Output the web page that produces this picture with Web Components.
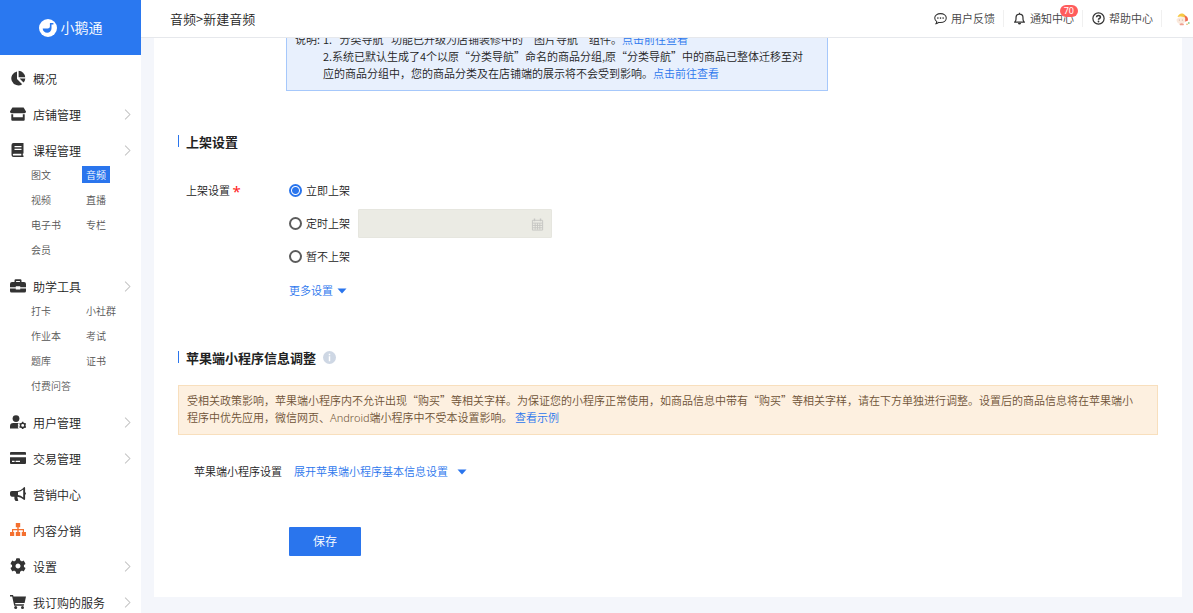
<!DOCTYPE html>
<html lang="zh-CN">
<head>
<meta charset="utf-8">
<title>新建音频</title>
<style>
    html, body {
        margin: 0;
        height: 100%;
        overflow: hidden;
    }
    body {
        font-family: "Noto Sans CJK SC", "Noto Sans", sans-serif;
        font-weight: 350;
        font-size: 11px;
        line-height: 17px;
        color: #222;
        background: #f4f6fb;
        --primary: #2a75ed;
    }
</style>
</head>
<body>
<admin-layout>
    <side-nav slot="side">
        <nav-item icon="pie" label="概况"></nav-item>
        <nav-item icon="store" label="店铺管理" arrow></nav-item>
        <nav-item icon="book" label="课程管理" arrow>
            <nav-link>图文</nav-link>
            <nav-link active>音频</nav-link>
            <nav-link>视频</nav-link>
            <nav-link>直播</nav-link>
            <nav-link>电子书</nav-link>
            <nav-link>专栏</nav-link>
            <nav-link>会员</nav-link>
        </nav-item>
        <nav-item icon="toolbox" label="助学工具" arrow>
            <nav-link>打卡</nav-link>
            <nav-link>小社群</nav-link>
            <nav-link>作业本</nav-link>
            <nav-link>考试</nav-link>
            <nav-link>题库</nav-link>
            <nav-link>证书</nav-link>
            <nav-link>付费问答</nav-link>
        </nav-item>
        <nav-item icon="user" label="用户管理" arrow></nav-item>
        <nav-item icon="card" label="交易管理" arrow></nav-item>
        <nav-item icon="horn" label="营销中心"></nav-item>
        <nav-item icon="sitemap" label="内容分销"></nav-item>
        <nav-item icon="cog" label="设置" arrow></nav-item>
        <nav-item icon="cart" label="我订购的服务" arrow></nav-item>
    </side-nav>
    <top-bar slot="top">
        <span slot="crumb">音频&gt;新建音频</span>
        <top-action icon="chat">用户反馈</top-action>
        <top-action icon="bell" badge="70">通知中心</top-action>
        <top-action icon="help">帮助中心</top-action>
    </top-bar>
    <audio-form></audio-form>
</admin-layout>

<script>
const ICONS = {
    pie: ['0 0 16 16', '<path d="M7 1.5V9l5.2 5.2A7 7 0 1 1 7 1.5z"/><path d="M8.6.8a7 7 0 0 1 6.6 6.4H8.6z"/><path d="M9.6 8.6h5.7a6.6 6.6 0 0 1-1.8 4z"/>'],
    store: ['0 0 16 16', '<path d="M2.4 1.5h11.2L16 5.6c0 1-.7 1.7-1.7 1.7H1.7C.7 7.300 0 6.600 0 5.600z"/><path d="M1.300 8.200h1.900v3h9.600v-3h1.900v5.500q0 1-1 1H2.300q-1 0-1-1z"/>'],
    book: ['0 0 16 16', '<path fill-rule="evenodd" d="M3.500 1H13.500v10.600h-.7v2h.7V15H3.500Q1.500 15 1.500 13V3Q1.500 1 3.500 1zM4.500 4.100v1.200h7V4.100zM4.500 6.700v1.200h7V6.700zM3.800 11.700q-1 .1-1 1t1 .9h7.500v-1.900z"/>'],
    toolbox: ['0 0 16 16', '<path fill-rule="evenodd" d="M4.500 4V2.600Q4.500 1.300 5.800 1.300h4.400q1.300 0 1.300 1.300V4H14q2 .2 2 2v3.300h-5.800v-1H5.800v1H0V6Q0 4.200 2 4zM6.100 4h3.800V2.900H6.100z"/><path d="M0 10.500h5.800v1h4.400v-1H16V13q0 1.500-1.500 1.500h-13Q0 14.500 0 13z"/>'],
    cog: ['0 0 512 512', '<path d="M487.4 315.7l-42.6-24.6c4.300-23.200 4.300-47 0-70.200l42.600-24.600c4.900-2.800 7.100-8.600 5.500-14-11.100-35.600-30-67.800-54.700-94.600-3.800-4.100-10-5.100-14.800-2.300L380.800 110c-17.900-15.400-38.500-27.300-60.800-35.100V25.800c0-5.600-3.900-10.500-9.400-11.700-36.700-8.200-74.300-7.800-109.200 0-5.500 1.200-9.400 6.100-9.400 11.700V75c-22.200 7.900-42.800 19.800-60.800 35.100L88.700 85.500c-4.900-2.800-11-1.900-14.800 2.300-24.700 26.700-43.600 58.900-54.700 94.600-1.700 5.400.6 11.200 5.500 14L67.300 221c-4.300 23.200-4.300 47 0 70.200l-42.600 24.600c-4.900 2.800-7.100 8.600-5.500 14 11.100 35.600 30 67.800 54.700 94.600 3.800 4.100 10 5.100 14.800 2.300l42.600-24.600c17.900 15.400 38.500 27.300 60.800 35.100v49.200c0 5.600 3.900 10.500 9.400 11.700 36.700 8.200 74.300 7.800 109.200 0 5.500-1.200 9.400-6.100 9.400-11.700v-49.200c22.200-7.900 42.800-19.800 60.800-35.100l42.600 24.600c4.900 2.800 11 1.900 14.800-2.300 24.700-26.700 43.600-58.900 54.700-94.600 1.500-5.500-.7-11.300-5.600-14.100zM256 336c-44.100 0-80-35.900-80-80s35.900-80 80-80 80 35.900 80 80-35.900 80-80 80z"/>'],
    user: ['0 0 16 16', '<circle cx="6" cy="4.600" r="3.400"/><path d="M0 14.600v-2.300Q0 9 3.300 9h4.800l.5.300-.9 1.600.8 1-.8 1 .9 1.700z"/><circle cx="12.700" cy="11.400" r="2.200" fill="none" stroke="currentColor" stroke-width="1.500"/><path stroke="currentColor" stroke-width="1.400" d="M12.700 7.700v1.500M12.700 13.600v1.500M9.500 9.500l1.300.8M14.600 12.500l1.300.8M9.500 13.300l1.300-.8M14.600 10.300l1.300-.8"/>'],
    card: ['0 0 16 16', '<path d="M1 2h14q1 0 1 1v1.700H0V3q0-1 1-1z"/><path fill-rule="evenodd" d="M0 7.300h16V13q0 1-1 1H1q-1 0-1-1zM2 10.800V12h2.600v-1.200zM5.600 10.800V12H10v-1.200z"/>'],
    horn: ['0 0 16 16', '<path fill-rule="evenodd" d="M14.200 1q.9 0 .9.900v4.300q.9.400.9 1.300t-.9 1.300v4.300q0 .9-.9.900-3.300-3-6.600-3.300-.7 1.200.4 2.200-.5.700.4 1.600-1.200 1-3.100.3-1.300-2-.9-4.100H1.800Q0 10.300 0 8.500v-1.800Q0 5 1.800 5h5q4-.2 7.400-4zM13.200 3.600Q10.800 5.700 8 6v3q2.800.3 5.200 2.400z"/>'],
    sitemap: ['0 0 16 16', '<path d="M5.800 1h4.400v4.200H8.700v1.900H14v3h2V14h-4.200v-3.900h1V8.300H8.700v1.800h1.500V14H5.800v-3.900h1.500V8.300H3.200v1.800h1V14H0v-3.900h2v-3h5.300V5.200H5.800z"/>'],
    cart: ['0 0 16 16', '<path d="M0 1h3l.5 1.600H16L14.600 9H5.100l.3 1.300h8.700l-.4 1.500H4.200L2.200 2.500H0z"/><circle cx="5.700" cy="13.600" r="1.500"/><circle cx="12.500" cy="13.600" r="1.500"/>'],
    chat: ['0 0 16 16', '<path fill="none" stroke="currentColor" stroke-width="1.300" d="M2.500 14.300q1-1.200.9-2.500Q.9 10.200.9 7.500C.9 4.300 4 2 8 2s7.100 2.300 7.100 5.500S12 13 8 13q-1.300 0-2.200-.2-1.500 1.400-3.300 1.500z"/><circle cx="4.800" cy="7.500" r="1"/><circle cx="8" cy="7.500" r="1"/><circle cx="11.200" cy="7.500" r="1"/>'],
    bell: ['0 0 16 16', '<path fill="none" stroke="currentColor" stroke-width="1.500" stroke-linejoin="round" d="M8 1v1.500M2 12.500h12q-1.700-1.500-1.700-3.500V7Q12.300 2.700 8 2.700T3.700 7v2q0 2-1.700 3.500z"/><path d="M6 13.500h4q-.4 2-2 2t-2-2z"/>'],
    help: ['0 0 16 16', '<g fill="none" stroke="currentColor" stroke-width="1.500"><circle cx="8" cy="8" r="6.900"/><path stroke-width="1.900" d="M5.500 6.500Q5.700 4.300 8 4.300t2.400 2q0 1.200-1.200 1.700T8 9.600"/></g><circle cx="8" cy="11.700" r="1.100"/>'],
    arrow: ['0 0 16 16', '<path fill="none" stroke="currentColor" stroke-width="1.500" d="M4.500 1 11.500 8l-7 7"/>'],
    caret: ['0 0 10 6', '<path d="M.5.500h9L5 5.500z"/>'],
    info: ['0 0 16 16', '<circle cx="8" cy="8" r="8"/><path fill="#fff" d="M7.100 3.500h1.800v1.800H7.100zM7.100 6.500h1.800v6H7.100z"/>'],
    calendar: ['0 0 14 14', '<path fill="none" stroke="currentColor" d="M1.500 2.500h11v10.500h-11zM1.500 5.500h11M1.500 8h11M1.500 10.500h11M4.500 5.500v7M7 5.500v7M9.500 5.500v7"/><path d="M3 .5h1.500v3H3zM9.500.5H11v3H9.500z"/>'],
    logo: ['0 0 18 18', '<circle cx="9" cy="9" r="9" fill="#fff"/><path fill="#2a78f0" d="M10.900 4.100h3.500v1.500h-1.900v3.700a4.400 4.400 0 0 1-8.800.1h5q2.200-.1 2.200-2z"/>'],
    avatar: ['0 0 16 16', '<path fill="#fbe9dc" d="M1.500 8.500a4.500 4.500 0 0 0 9 .5l-1-3-6 .5z"/><path fill="#f6c844" d="M2.500 6Q4 2 7.500 2.500q3 .8 3.500 4.500L8.500 6q-3-1-6 0z"/><path fill="#ee6a4f" d="M9.300 4.200q4 1 3.700 5.300l-2.800 1.200q.6-3.500-.9-6.500z"/><path fill="#f0a090" d="M4.500 13q2-1.500 4.500 0l-.5 1.300H5z"/><circle cx="4.300" cy="9" r=".5" fill="#b98"/><circle cx="7.300" cy="9" r=".5" fill="#b98"/><circle cx="13.800" cy="12" r=".9" fill="#8ed08b"/><circle cx="12" cy="13.300" r=".8" fill="#f5a95a"/>']
};

class UiIcon extends HTMLElement {
    constructor() {
        super();
        this.attachShadow({mode: 'open'});
    }
    connectedCallback() {
        const [box, shape] = ICONS[this.getAttribute('name')];
        this.shadowRoot.innerHTML = `
            <style>
                :host {
                    display: block;
                    flex: none;
                    width: 16px;
                    height: 16px;
                }
                svg {
                    display: block;
                    width: 100%;
                    height: 100%;
                }
            </style>
            <svg viewBox="${box}" fill="currentColor" aria-hidden="true">${shape}</svg>
        `;
    }
}
customElements.define('ui-icon', UiIcon);

class AdminLayout extends HTMLElement {
    constructor() {
        super();
        this.attachShadow({mode: 'open'});
        this.shadowRoot.innerHTML = `
            <style>
                :host {
                    display: grid;
                    grid-template-columns: 141px minmax(0, 1fr);
                    grid-template-rows: 38px minmax(0, 1fr);
                    height: 100vh;
                }
                aside {
                    grid-row: 1 / 3;
                    overflow: hidden;
                    background: #fff;
                }
                main {
                    overflow: hidden;
                    padding: 0 11px 16px 13px;
                }
            </style>
            <aside><slot name="side"></slot></aside>
            <slot name="top"></slot>
            <main><slot></slot></main>
        `;
    }
}
customElements.define('admin-layout', AdminLayout);

class SideNav extends HTMLElement {
    constructor() {
        super();
        this.attachShadow({mode: 'open'});
        this.shadowRoot.innerHTML = `
            <style>
                :host {
                    display: block;
                }
                .brand {
                    display: flex;
                    align-items: center;
                    justify-content: center;
                    gap: 4px;
                    height: 55px;
                    background: #2a78f0;
                    color: #fff;
                    font-size: 14px;
                }
                .brand ui-icon {
                    width: 18px;
                    height: 18px;
                }
                nav {
                    display: flex;
                    flex-direction: column;
                    gap: 12px;
                    padding-top: 11px;
                }
            </style>
            <div class="brand"><ui-icon name="logo"></ui-icon><span>小鹅通</span></div>
            <nav><slot></slot></nav>
        `;
    }
}
customElements.define('side-nav', SideNav);

class NavItem extends HTMLElement {
    constructor() {
        super();
        this.attachShadow({mode: 'open'});
    }
    connectedCallback() {
        this.shadowRoot.innerHTML = `
            <style>
                :host {
                    display: block;
                }
                .head {
                    display: flex;
                    align-items: center;
                    height: 24px;
                    padding: 0 8px 0 10px;
                    gap: 7px;
                    color: #222;
                    font-size: 12px;
                    text-decoration: none;
                }
                .head ui-icon {
                    color: #333;
                }
                .head ui-icon[name="sitemap"] {
                    color: #f4702f;
                }
                .head span {
                    flex: 1;
                }
                .head ui-icon.arrow {
                    width: 11px;
                    height: 11px;
                    color: #c4c4c4;
                }
                .links {
                    display: grid;
                    grid-template-columns: 55px 1fr;
                    grid-auto-rows: 25px;
                    align-items: center;
                    justify-items: start;
                    padding-left: 27px;
                }
            </style>
            <a class="head" href="#">
                <ui-icon name="${this.getAttribute('icon')}"></ui-icon>
                <span>${this.getAttribute('label')}</span>
                ${this.hasAttribute('arrow') ? '<ui-icon class="arrow" name="arrow"></ui-icon>' : ''}
            </a>
            <div class="links"><slot></slot></div>
        `;
    }
}
customElements.define('nav-item', NavItem);

class NavLink extends HTMLElement {
    constructor() {
        super();
        this.attachShadow({mode: 'open'});
        this.shadowRoot.innerHTML = `
            <style>
                :host {
                    display: block;
                }
                a {
                    display: block;
                    padding: 0 4px;
                    color: #555;
                    font-size: 10px;
                    line-height: 17px;
                    text-decoration: none;
                }
                :host([active]) a {
                    background: var(--primary);
                    color: #fff;
                }
            </style>
            <a href="#"><slot></slot></a>
        `;
    }
}
customElements.define('nav-link', NavLink);

class TopBar extends HTMLElement {
    constructor() {
        super();
        this.attachShadow({mode: 'open'});
        this.shadowRoot.innerHTML = `
            <style>
                :host {
                    display: flex;
                    align-items: center;
                    justify-content: space-between;
                    box-sizing: border-box;
                    padding: 0 2px 0 29px;
                    border-bottom: 1px solid #e6e8ec;
                    background: #fff;
                }
                .crumb {
                    font-size: 13px;
                }
                .actions {
                    display: flex;
                    align-items: center;
                }
                .actions > ui-icon {
                    margin-left: 13px;
                }
            </style>
            <div class="crumb"><slot name="crumb"></slot></div>
            <div class="actions"><slot></slot><ui-icon name="avatar"></ui-icon></div>
        `;
    }
}
customElements.define('top-bar', TopBar);

class TopAction extends HTMLElement {
    constructor() {
        super();
        this.attachShadow({mode: 'open'});
    }
    connectedCallback() {
        const badge = this.getAttribute('badge');
        this.shadowRoot.innerHTML = `
            <style>
                :host {
                    display: block;
                    border-right: 1px solid #f0f0f0;
                }
                a {
                    position: relative;
                    display: flex;
                    align-items: center;
                    gap: 4px;
                    padding: 0 8px 0 9px;
                    color: #444;
                    text-decoration: none;
                }
                ui-icon {
                    width: 13px;
                    height: 13px;
                    color: #333;
                }
                .badge {
                    position: absolute;
                    right: 4px;
                    top: -5px;
                    padding: 0 4px;
                    border-radius: 6px;
                    background: #ff5c5c;
                    color: #fff;
                    font: 400 9px/12px "Noto Sans", sans-serif;
                }
            </style>
            <a href="#">
                <ui-icon name="${this.getAttribute('icon')}"></ui-icon>
                <slot></slot>
                ${badge ? `<span class="badge">${badge}</span>` : ''}
            </a>
        `;
    }
}
customElements.define('top-action', TopAction);

class FormSection extends HTMLElement {
    constructor() {
        super();
        this.attachShadow({mode: 'open'});
        this.shadowRoot.innerHTML = `
            <style>
                :host {
                    display: block;
                }
                header {
                    display: flex;
                    align-items: center;
                    gap: 7px;
                    height: 20px;
                }
                header::before {
                    content: "";
                    width: 1px;
                    height: 12px;
                    background: var(--primary);
                }
                h2 {
                    margin: 0;
                    font-size: 13px;
                    font-weight: 700;
                }
            </style>
            <header><h2><slot name="title"></slot></h2><slot name="extra"></slot></header>
            <slot></slot>
        `;
    }
}
customElements.define('form-section', FormSection);

class NoticeBox extends HTMLElement {
    constructor() {
        super();
        this.attachShadow({mode: 'open'});
        this.shadowRoot.innerHTML = `
            <style>
                :host {
                    display: block;
                    box-sizing: border-box;
                    padding: 6px 8px 8px;
                    border: 1px solid #a6c8fb;
                    background: #e8f0fd;
                }
                :host([type="warning"]) {
                    border-color: #f8dfbd;
                    background: #fdf0e0;
                    color: #6e5236;
                    line-height: 17px;
                }
            </style>
            <slot></slot>
        `;
    }
}
customElements.define('notice-box', NoticeBox);

class AudioForm extends HTMLElement {
    constructor() {
        super();
        this.attachShadow({mode: 'open'});
        this.shadowRoot.innerHTML = `
            <style>
                :host {
                    display: flow-root;
                    height: 100%;
                    box-sizing: border-box;
                    padding: 0 24px;
                    background: #fff;
                }
                a {
                    color: var(--primary);
                    text-decoration: none;
                }
                .latin {
                    font-family: "Noto Sans", sans-serif;
                }
                /* upper part of the notice is scrolled under the top bar */
                .nav-notice {
                    width: 542px;
                    max-width: 100%;
                    margin: -14px 0 40px 108px;
                }
                .nav-notice > div {
                    display: grid;
                    grid-template-columns: 28px 1fr;
                }
                .nav-notice p {
                    margin: 0;
                    white-space: nowrap;
                }
                .publish {
                    display: grid;
                    grid-template-columns: 103px 1fr;
                    margin: 25px 0 48px 8px;
                }
                .name {
                    line-height: 29px;
                }
                .name b {
                    color: #f22;
                    font: 400 15px/16px "Noto Sans", sans-serif;
                    vertical-align: -2px;
                }
                .options {
                    display: grid;
                    gap: 4px;
                }
                .option {
                    display: flex;
                    align-items: center;
                    height: 29px;
                }
                .option label {
                    display: flex;
                    align-items: center;
                    gap: 4px;
                }
                input[type="radio"] {
                    appearance: none;
                    box-sizing: border-box;
                    width: 13px;
                    height: 13px;
                    margin: 0;
                    border: 2px solid #5c5c5c;
                    border-radius: 50%;
                    background: #fff;
                }
                input[type="radio"]:checked {
                    border-color: var(--primary);
                    background: radial-gradient(circle, var(--primary) 3px, #fff 4px);
                }
                .date {
                    position: relative;
                    width: 194px;
                    margin-left: 8px;
                }
                .date input {
                    display: block;
                    box-sizing: border-box;
                    width: 100%;
                    height: 29px;
                    padding: 0 28px 0 8px;
                    border: 1px solid #e6e6df;
                    border-radius: 1px;
                    background: #ebebe4;
                    font: inherit;
                }
                .date ui-icon {
                    position: absolute;
                    right: 8px;
                    top: 9px;
                    width: 13px;
                    height: 13px;
                    color: #c6c6c3;
                }
                .toggle {
                    display: inline-flex;
                    align-items: center;
                    justify-self: start;
                    gap: 4px;
                }
                .toggle ui-icon {
                    width: 10px;
                    height: 6px;
                }
                .options .toggle {
                    padding-top: 7px;
                }
                .info {
                    width: 13px;
                    height: 13px;
                    color: #ced7e4;
                }
                notice-box[type="warning"] {
                    margin-top: 18px;
                }
                .apple {
                    display: grid;
                    grid-template-columns: 100px 1fr;
                    margin: 28px 0 47px 16px;
                }
                .apple .toggle {
                    gap: 9px;
                }
                button {
                    display: block;
                    width: 72px;
                    height: 29px;
                    margin-left: 111px;
                    padding: 0 0 2px;
                    border: 0;
                    border-radius: 1px;
                    background: var(--primary);
                    color: #fff;
                    font: inherit;
                    font-size: 12px;
                }
            </style>
            <notice-box class="nav-notice">
                <div>
                    <span>说明:</span>
                    <div>
                        <p>1. "分类导航" 功能已升级为店铺装修中的“图片导航”组件。<a href="#">点击前往查看</a></p>
                        <p>2.系统已默认生成了4个以原“分类导航”命名的商品分组,原“分类导航”中的商品已整体迁移至对<br>应的商品分组中，您的商品分类及在店铺端的展示将不会受到影响。<a href="#">点击前往查看</a></p>
                    </div>
                </div>
            </notice-box>
            <form-section>
                <span slot="title">上架设置</span>
                <div class="publish" role="radiogroup" aria-labelledby="publish-name">
                    <div class="name" id="publish-name">上架设置 <b>*</b></div>
                    <div class="options">
                        <div class="option"><label><input type="radio" name="publish" checked>立即上架</label></div>
                        <div class="option">
                            <label><input type="radio" name="publish">定时上架</label>
                            <div class="date">
                                <input type="text" aria-label="定时上架" disabled>
                                <ui-icon name="calendar"></ui-icon>
                            </div>
                        </div>
                        <div class="option"><label><input type="radio" name="publish">暂不上架</label></div>
                        <a class="toggle" href="#">更多设置<ui-icon name="caret"></ui-icon></a>
                    </div>
                </div>
            </form-section>
            <form-section>
                <span slot="title">苹果端小程序信息调整</span>
                <ui-icon slot="extra" class="info" name="info"></ui-icon>
                <notice-box type="warning">受相关政策影响，苹果端小程序内不允许出现“购买”等相关字样。为保证您的小程序正常使用，如商品信息中带有“购买”等相关字样，请在下方单独进行调整。设置后的商品信息将在苹果端小<br>程序中优先应用，微信网页、<span class="latin">Android</span>端小程序中不受本设置影响。 <a href="#">查看示例</a></notice-box>
                <div class="apple">
                    <span>苹果端小程序设置</span>
                    <a class="toggle" href="#">展开苹果端小程序基本信息设置<ui-icon name="caret"></ui-icon></a>
                </div>
            </form-section>
            <button type="button">保存</button>
        `;
    }
}
customElements.define('audio-form', AudioForm);
</script>
</body>
</html>
